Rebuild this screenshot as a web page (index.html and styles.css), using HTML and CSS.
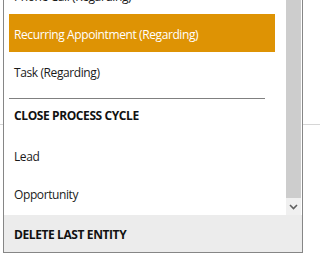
FILE: index.html
```html
<!DOCTYPE html>
<html>
<head>
<meta charset="utf-8">
<link rel="stylesheet" href="styles.css">
</head>
<body>
<div class="dropdown">
  <div class="list-area">
    <div class="items">
      <div class="items-inner">
        <div class="row">Phone Call (Regarding)</div>
        <div class="row selected">Recurring Appointment (Regarding)</div>
        <div class="row">Task (Regarding)</div>
        <div class="separator"></div>
        <div class="header">CLOSE PROCESS CYCLE</div>
        <div class="row">Lead</div>
        <div class="row">Opportunity</div>
      </div>
    </div>
    <div class="scrollbar">
      <div class="thumb"></div>
      <div class="arrow">
        <svg width="9" height="6" viewBox="0 0 9 6"><path d="M1 1 L4.5 4.5 L8 1" fill="none" stroke="#606060" stroke-width="1.6"/></svg>
      </div>
    </div>
  </div>
  <div class="footer">DELETE LAST ENTITY</div>
</div>
</body>
</html>
```
FILE: styles.css
```css
html, body {
  margin: 0;
  padding: 0;
}
body {
  background: #ffffff linear-gradient(#d6d6d6, #d6d6d6) 0 124px / 100% 1px no-repeat;
  font-family: "Open Sans", "Noto Sans", sans-serif;
  font-size: 12px;
  letter-spacing: -0.4px;
  color: #1a1a1a;
  width: 309px;
  height: 265px;
  overflow: hidden;
}
.dropdown {
  margin-left: 3px;
  width: 300px;
  box-sizing: border-box;
  border: 1px solid #868686;
  border-top: none;
  background: #ffffff;
}
.list-area {
  display: flex;
  height: 215px;
}
.items {
  flex: 1;
  overflow: hidden;
}
.items-inner {
  margin-top: -24px;
}
.row {
  box-sizing: border-box;
  height: 38px;
  line-height: 16px;
  padding: 13px 0 0 5px;
  margin: 0 11px 0 5px;
  white-space: nowrap;
}
.row.selected {
  background: #de9304;
  color: #ffffff;
}
.separator {
  height: 1px;
  background: #808080;
  margin: 8px 21px 0 5px;
}
.header {
  box-sizing: border-box;
  height: 37px;
  line-height: 16px;
  padding: 9px 0 0 10px;
  font-weight: bold;
  color: #111111;
}
.scrollbar {
  width: 15px;
  margin-right: 1px;
  display: flex;
  flex-direction: column;
}
.thumb {
  flex: 1;
  background: #cdcdcd;
}
.arrow {
  height: 17px;
  background: #f0f0f0;
  display: flex;
  align-items: center;
  justify-content: center;
}
.arrow svg {
  display: block;
}
.footer {
  box-sizing: border-box;
  height: 37px;
  line-height: 16px;
  padding: 12px 0 0 10px;
  background: #ececec;
  font-weight: bold;
  color: #111111;
}
```
